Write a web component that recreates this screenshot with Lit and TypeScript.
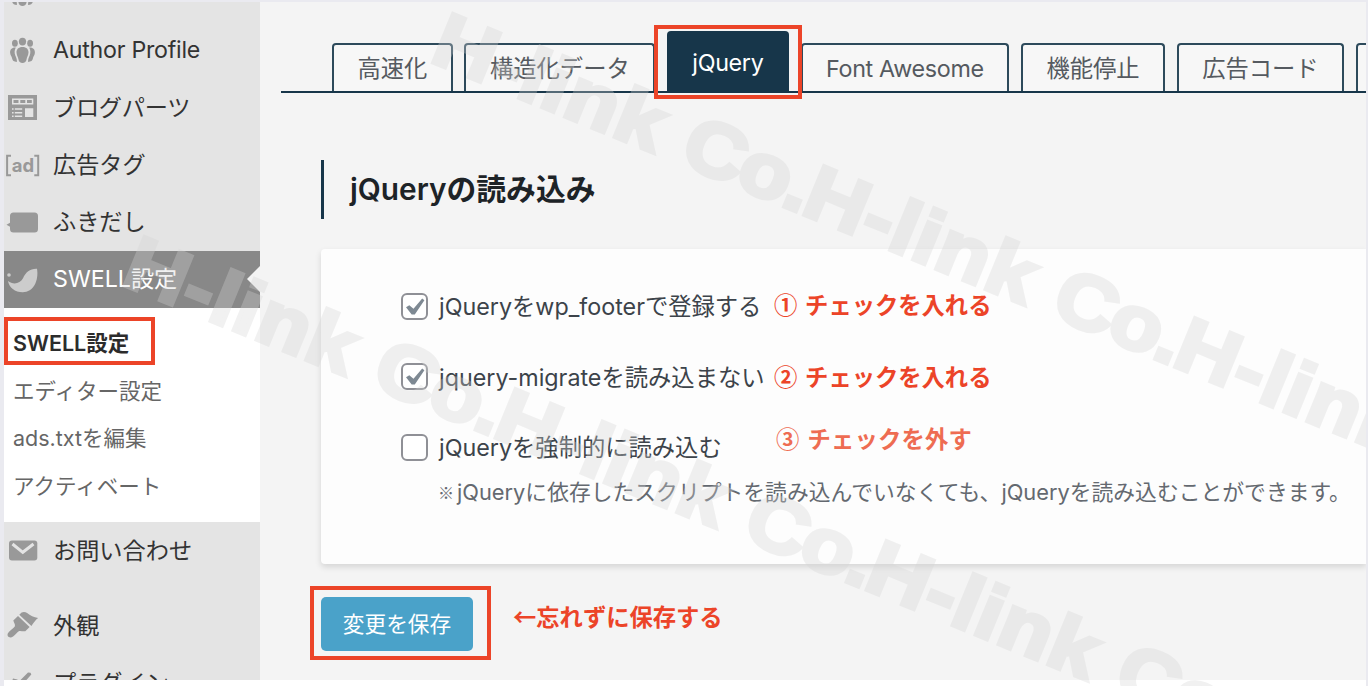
import { LitElement, html, css, svg } from 'lit';
import { customElement, property } from 'lit/decorators.js';
import { classMap } from 'lit/directives/class-map.js';

interface MenuItem {
  icon: string;
  label: string;
  tight?: boolean;
  separated?: boolean;
}

interface Tab {
  label: string;
  latin?: boolean;
  active?: boolean;
}

interface Setting {
  label: string;
  checked: boolean;
  note?: string;
  hint: string;
}

const MENU_TOP: MenuItem[] = [
  { icon: 'groups', label: '' },
  { icon: 'groups', label: 'Author Profile', tight: true },
  { icon: 'parts', label: 'ブログパーツ', tight: true },
  { icon: 'ad', label: '広告タグ' },
  { icon: 'balloon', label: 'ふきだし' },
];

const MENU_BOTTOM: MenuItem[] = [
  { icon: 'mail', label: 'お問い合わせ' },
  { icon: 'brush', label: '外観', separated: true },
  { icon: 'plug', label: 'プラグイン' },
];

const SUBMENU = ['SWELL設定', 'エディター設定', 'ads.txtを編集', 'アクティベート'];

const TABS: Tab[] = [
  { label: '高速化' },
  { label: '構造化データ' },
  { label: 'jQuery', latin: true, active: true },
  { label: 'Font Awesome', latin: true },
  { label: '機能停止' },
  { label: '広告コード' },
  { label: '' },
];

const SETTINGS: Setting[] = [
  { label: 'jQueryをwp_footerで登録する', checked: true, hint: '① チェックを入れる' },
  { label: 'jquery-migrateを読み込まない', checked: true, hint: '② チェックを入れる' },
  {
    label: 'jQueryを強制的に読み込む',
    checked: false,
    hint: '③ チェックを外す',
    note: 'jQueryに依存したスクリプトを読み込んでいなくても、jQueryを読み込むことができます。',
  },
];

const ICONS: Record<string, unknown> = {
  groups: svg`
    <ellipse cx="18.500" cy="11.600" rx="3.600" ry="3.900"/>
    <ellipse cx="10.900" cy="13.200" rx="2.900" ry="3.500"/>
    <ellipse cx="26.100" cy="13.200" rx="2.900" ry="3.500"/>
    <path d="M18.500 16.900c4 0 6.200 2.400 6 5.600-.2 3.200-1.600 4.200-2 7-.3 2.300-1.800 3.400-4 3.400s-3.700-1.100-4-3.400c-.4-2.800-1.800-3.800-2-7-.2-3.200 2-5.600 6-5.600z"/>
    <path d="M11.800 17.500c-4-.3-5.900 2.200-5.700 5.300.2 2.500 1.600 3.500 1.900 5.200.5 3 2 3.600 4.900 3.900.2-2.700-.7-4.400-1.500-6.200-1.200-3-1-5.700.4-8.200z"/>
    <path d="M25.200 17.500c4-.3 5.900 2.200 5.700 5.300-.2 2.500-1.600 3.500-1.900 5.200-.5 3-2 3.600-4.900 3.900-.2-2.700.7-4.400 1.500-6.200 1.200-3 1-5.700-.4-8.200z"/>`,
  parts: svg`
    <path fill-rule="evenodd" d="M4 8h29v25H4zM8 11.500v6h21.300v-6zM21 21.300v8.700h8.300v-8.700z"/>
    <path d="M9.500 13h5v3h-5zM16.300 13h5v3h-5zM23 13h4.800v3H23z"/>
    <path class="cut" d="M8 21.300h1.600v1.500H8zM10.800 21.300h7.400v1.500h-7.400zM8 25h1.600v1.500H8zM10.800 25h7.400v1.500h-7.400zM8 28.500h1.600V30H8zM10.800 28.500h7.400V30h-7.400z"/>`,
  ad: svg`
    <path class="line" d="M7 10.700H3.100v19.600H7M30.300 10.700h3.900v19.600h-3.900"/>
    <text x="7.700" y="26.900">ad</text>`,
  balloon: svg`<path d="M9.500 10.500h21a3.500 3.500 0 0 1 3.500 3.500v13a3.500 3.500 0 0 1-3.500 3.500h-21A3.500 3.500 0 0 1 6 27v-2.300l-3.500-2 3.500-2V14a3.500 3.500 0 0 1 3.500-3.500z"/>`,
  swell: svg`
    <circle cx="5" cy="15" r="1.800"/>
    <path d="M4 21c5 4 12 3 15-2.700C22 12 26 8.500 33 8.800c2 11.700-3.500 23.500-14.300 23.500C11 32.300 5 27.500 4 21z"/>`,
  mail: svg`
    <rect x="5" y="10.500" width="28.300" height="20" rx="3"/>
    <path class="cut-line" d="M8.500 14l10.300 8.300L29.500 14"/>`,
  brush: svg`
    <path d="M9.300 15.600l4.700-4.700 11.600 11-4.300 4.300c-2.300.6-4.200-.6-6-.2-2.300.9-4.800 5.700-8.300 6.400-2.500.4-4.100-1.700-3.200-3.900 1-2.500 5.200-4.500 7-7 .8-1.700-.8-3.500-1.500-5.900z"/>
    <path d="M15.300 9.700l2.300-2.200c1.800-.9 4-.6 5.500.5 3.200 2.700 6.700 4.400 11 4.900-2.600 2-4.300 4.600-6.700 8z"/>`,
  plug: svg`<path d="M15.500 18l8.500-8.500 2.500.3.800 1.700-7.500 8.500zM9 15.500l4.300 1 4 4.500H7zM27 17.500l3.800 1.500v3H24z"/>`,
};

@customElement('menu-icon')
export class MenuIcon extends LitElement {
  static override styles = css`
    :host {
      display: block;
      width: 38px;
      height: 40px;
      flex: none;
    }

    svg {
      display: block;
      fill: currentColor;
    }

    text {
      font: 700 18.500px Inter, 'Liberation Sans', sans-serif;
    }

    .line {
      fill: none;
      stroke: currentColor;
      stroke-width: 2;
    }

    .cut {
      fill: #e4e4e4;
    }

    .cut-line {
      fill: none;
      stroke: #e4e4e4;
      stroke-width: 3;
    }
  `;

  @property({ type: String }) name = '';

  override render() {
    return html`<svg width="38" height="40" viewBox="0 0 38 40">${ICONS[this.name]}</svg>`;
  }
}

@customElement('admin-sidebar')
export class AdminSidebar extends LitElement {
  static override styles = css`
    :host {
      display: block;
      width: 256px;
      height: 678px;
      flex: none;
      overflow: hidden;
      background: #e4e4e4;
      color: #333;
      font-size: 23.200px;
    }

    nav {
      margin-top: -37px;
    }

    .item {
      display: flex;
      align-items: center;
      gap: 11px;
      height: 57.300px;
      line-height: 57px;
      white-space: nowrap;
    }

    .item menu-icon {
      margin-top: -2px;
      color: #999;
    }

    .item.separated {
      margin-top: 18px;
    }

    .tight {
      letter-spacing: -0.25px;
    }

    .item.current {
      position: relative;
      height: 57px;
      background: #888;
      color: #fff;
    }

    .item.current menu-icon {
      margin-top: 0;
      color: #ccc;
    }

    .item.current::after {
      content: '';
      position: absolute;
      right: 0;
      top: 15px;
      border: solid transparent;
      border-width: 13px 13px 13px 0;
      border-right-color: #f4f4f4;
    }

    .submenu {
      box-sizing: border-box;
      height: 214px;
      padding: 12px 0 0 9px;
      background: #fff;
      color: #666;
      font-size: 21.500px;
    }

    .submenu div {
      height: 47.500px;
      line-height: 47px;
    }

    .submenu .current {
      position: relative;
      color: #2c2c2c;
      font-weight: 600;
    }

    .submenu .current::after {
      content: '';
      position: absolute;
      left: -9px;
      top: -3px;
      box-sizing: border-box;
      width: 151px;
      height: 48px;
      border: 4px solid #ec4428;
    }
  `;

  override render() {
    return html`
      <nav>
        ${MENU_TOP.map((item) => this._renderItem(item))}
        <div class="item current">
          <menu-icon name="swell"></menu-icon>
          <span>SWELL設定</span>
        </div>
        <div class="submenu">
          ${SUBMENU.map((label, i) => html`<div class=${classMap({ current: i === 0 })}>${label}</div>`)}
        </div>
        ${MENU_BOTTOM.map((item) => this._renderItem(item))}
      </nav>
    `;
  }

  private _renderItem(item: MenuItem) {
    return html`
      <div class=${classMap({ item: true, separated: !!item.separated })}>
        <menu-icon name=${item.icon}></menu-icon>
        <span class=${classMap({ tight: !!item.tight })}>${item.label}</span>
      </div>
    `;
  }
}

@customElement('settings-page')
export class SettingsPage extends LitElement {
  static override styles = css`
    :host {
      display: block;
      flex: 1;
      min-width: 0;
      height: 678px;
      overflow: hidden;
      background: #f4f4f4;
      color: #3c434a;
      font-size: 23.300px;
    }

    .tabs {
      display: flex;
      align-items: flex-end;
      gap: 11.600px;
      box-sizing: border-box;
      height: 91px;
      margin-left: 21px;
      padding-left: 51px;
      border-bottom: 2px solid #17364a;
    }

    .tab {
      flex: none;
      box-sizing: border-box;
      height: 48px;
      padding: 0 23.500px;
      border: solid #2d4a5b;
      border-width: 2px 2px 0;
      border-radius: 4px 4px 0 0;
      background: #f7f7f7;
      color: #555a60;
      line-height: 48px;
      white-space: nowrap;
    }

    .tab.latin {
      letter-spacing: -0.33px;
    }

    .tab.active {
      position: relative;
      height: 60px;
      border-color: #17364a;
      background: #17364a;
      color: #fff;
      line-height: 60px;
    }

    .tab.active::after {
      content: '';
      position: absolute;
      z-index: 1;
      inset: -8px -15px -8px;
      border: 4px solid #ec4428;
    }

    h2 {
      height: 59px;
      margin: 67px 0 30px 61px;
      padding-left: 26px;
      border-left: 3px solid #17364a;
      color: #1d2327;
      font-size: 29.800px;
      font-weight: 600;
      line-height: 58px;
    }

    .card {
      box-sizing: border-box;
      height: 315px;
      margin-left: 61px;
      padding: 22px 0 0 80px;
      border-radius: 4px 0 0 4px;
      background: #fdfdfd;
      box-shadow: 0 3px 6px rgba(0, 0, 0, 0.13);
    }

    .row {
      position: relative;
      display: flex;
      align-items: center;
      gap: 11px;
      height: 70.500px;
      white-space: nowrap;
    }

    .label {
      margin-top: -2px;
    }

    .check {
      box-sizing: border-box;
      width: 27px;
      height: 27px;
      flex: none;
      border: 2px solid #8f9096;
      border-radius: 6px;
      background: #fff;
    }

    .check svg {
      display: block;
    }

    .hint,
    .reminder {
      color: #ec4428;
      font-family: 'Noto Sans CJK JP', sans-serif;
      font-weight: 600;
    }

    .hint {
      position: absolute;
      left: 373px;
      top: 17px;
      line-height: 32px;
      word-spacing: 2.500px;
    }

    .row:nth-of-type(2) .hint {
      top: 18px;
    }

    .row:nth-of-type(3) .hint {
      left: 375px;
      top: 10px;
      color: #ee6c52;
      letter-spacing: 0.2px;
    }

    .note {
      display: flex;
      align-items: center;
      margin: -8px 0 0 37px;
      color: #646970;
      font-size: 21.800px;
      line-height: 34px;
      white-space: nowrap;
    }

    .note small {
      width: 19px;
      flex: none;
      font-family: 'Noto Sans CJK JP', sans-serif;
      font-size: 16px;
      font-weight: 600;
    }

    .submit {
      display: flex;
      align-items: center;
      gap: 40px;
      padding: 33px 0 0 61px;
    }

    button {
      position: relative;
      width: 152px;
      height: 54px;
      padding: 0 0 3px;
      border: 0;
      border-radius: 5px;
      background: #4aa2c9;
      color: #fff;
      font: inherit;
      font-size: 21.700px;
    }

    button::after {
      content: '';
      position: absolute;
      inset: -11px -18px -9px -11px;
      border: 4px solid #ec4428;
    }

    .reminder {
      margin-top: -16px;
    }
  `;

  override render() {
    return html`
      <div class="tabs">
        ${TABS.map(
          (tab) => html`<div class=${classMap({ tab: true, latin: !!tab.latin, active: !!tab.active })}>${tab.label}</div>`,
        )}
      </div>
      <h2>jQueryの読み込み</h2>
      <div class="card">${SETTINGS.map((s) => this._renderSetting(s))}</div>
      <div class="submit">
        <button>変更を保存</button>
        <span class="reminder">←忘れずに保存する</span>
      </div>
    `;
  }

  private _renderSetting(s: Setting) {
    return html`
      <div class="row">
        <span class="check">
          ${s.checked
            ? html`<svg width="23" height="23" viewBox="0 0 23 23">
                <path d="M3 12.200l3.300-2 4.200 3.600 8.700-10.200 2.200 1.700-9.600 14.200H8.700z" fill="#7e8993" />
              </svg>`
            : ''}
        </span>
        <span class="label">${s.label}</span>
        <span class="hint">${s.hint}</span>
      </div>
      ${s.note ? html`<div class="note"><small>※</small>${s.note}</div>` : ''}
    `;
  }
}

@customElement('app-root')
export class AppRoot extends LitElement {
  static override styles = css`
    :host {
      position: relative;
      display: block;
      box-sizing: border-box;
      width: 1368px;
      height: 686px;
      padding: 2px 2px 0 4px;
      overflow: hidden;
      background: #eaeaf0;
      font-family: Inter, 'Noto Sans CJK JP', sans-serif;
    }

    .screen {
      display: flex;
      height: 684px;
      background: #fff;
    }

    .watermark {
      position: absolute;
      left: 0;
      top: 0;
      pointer-events: none;
    }

    .watermark text {
      fill: #d4d4d4;
      stroke: #d4d4d4;
      stroke-width: 4px;
      opacity: 0.32;
      font: 700 76.500px 'Liberation Sans', Arial, sans-serif;
    }

    .name {
      letter-spacing: 0.9px;
    }

    .suffix {
      letter-spacing: -2.100px;
    }
  `;

  override render() {
    return html`
      <div class="screen">
        <admin-sidebar></admin-sidebar>
        <settings-page></settings-page>
      </div>
      <svg class="watermark" width="1366" height="686" viewBox="0 0 1366 686">
        ${this._renderWatermark(428, 60.5)}
        ${this._renderWatermark(119.5, 283.5)}
      </svg>
    `;
  }

  private _renderWatermark(x: number, y: number) {
    const unit = svg`<tspan class="name">H-link </tspan><tspan class="suffix">Co.</tspan>`;
    return svg`
      <text transform="translate(${x} ${y}) rotate(22.3)" textLength="1203" lengthAdjust="spacingAndGlyphs">${unit}${unit}${unit}</text>
    `;
  }
}

declare global {
  interface HTMLElementTagNameMap {
    'menu-icon': MenuIcon;
    'admin-sidebar': AdminSidebar;
    'settings-page': SettingsPage;
    'app-root': AppRoot;
  }
}
